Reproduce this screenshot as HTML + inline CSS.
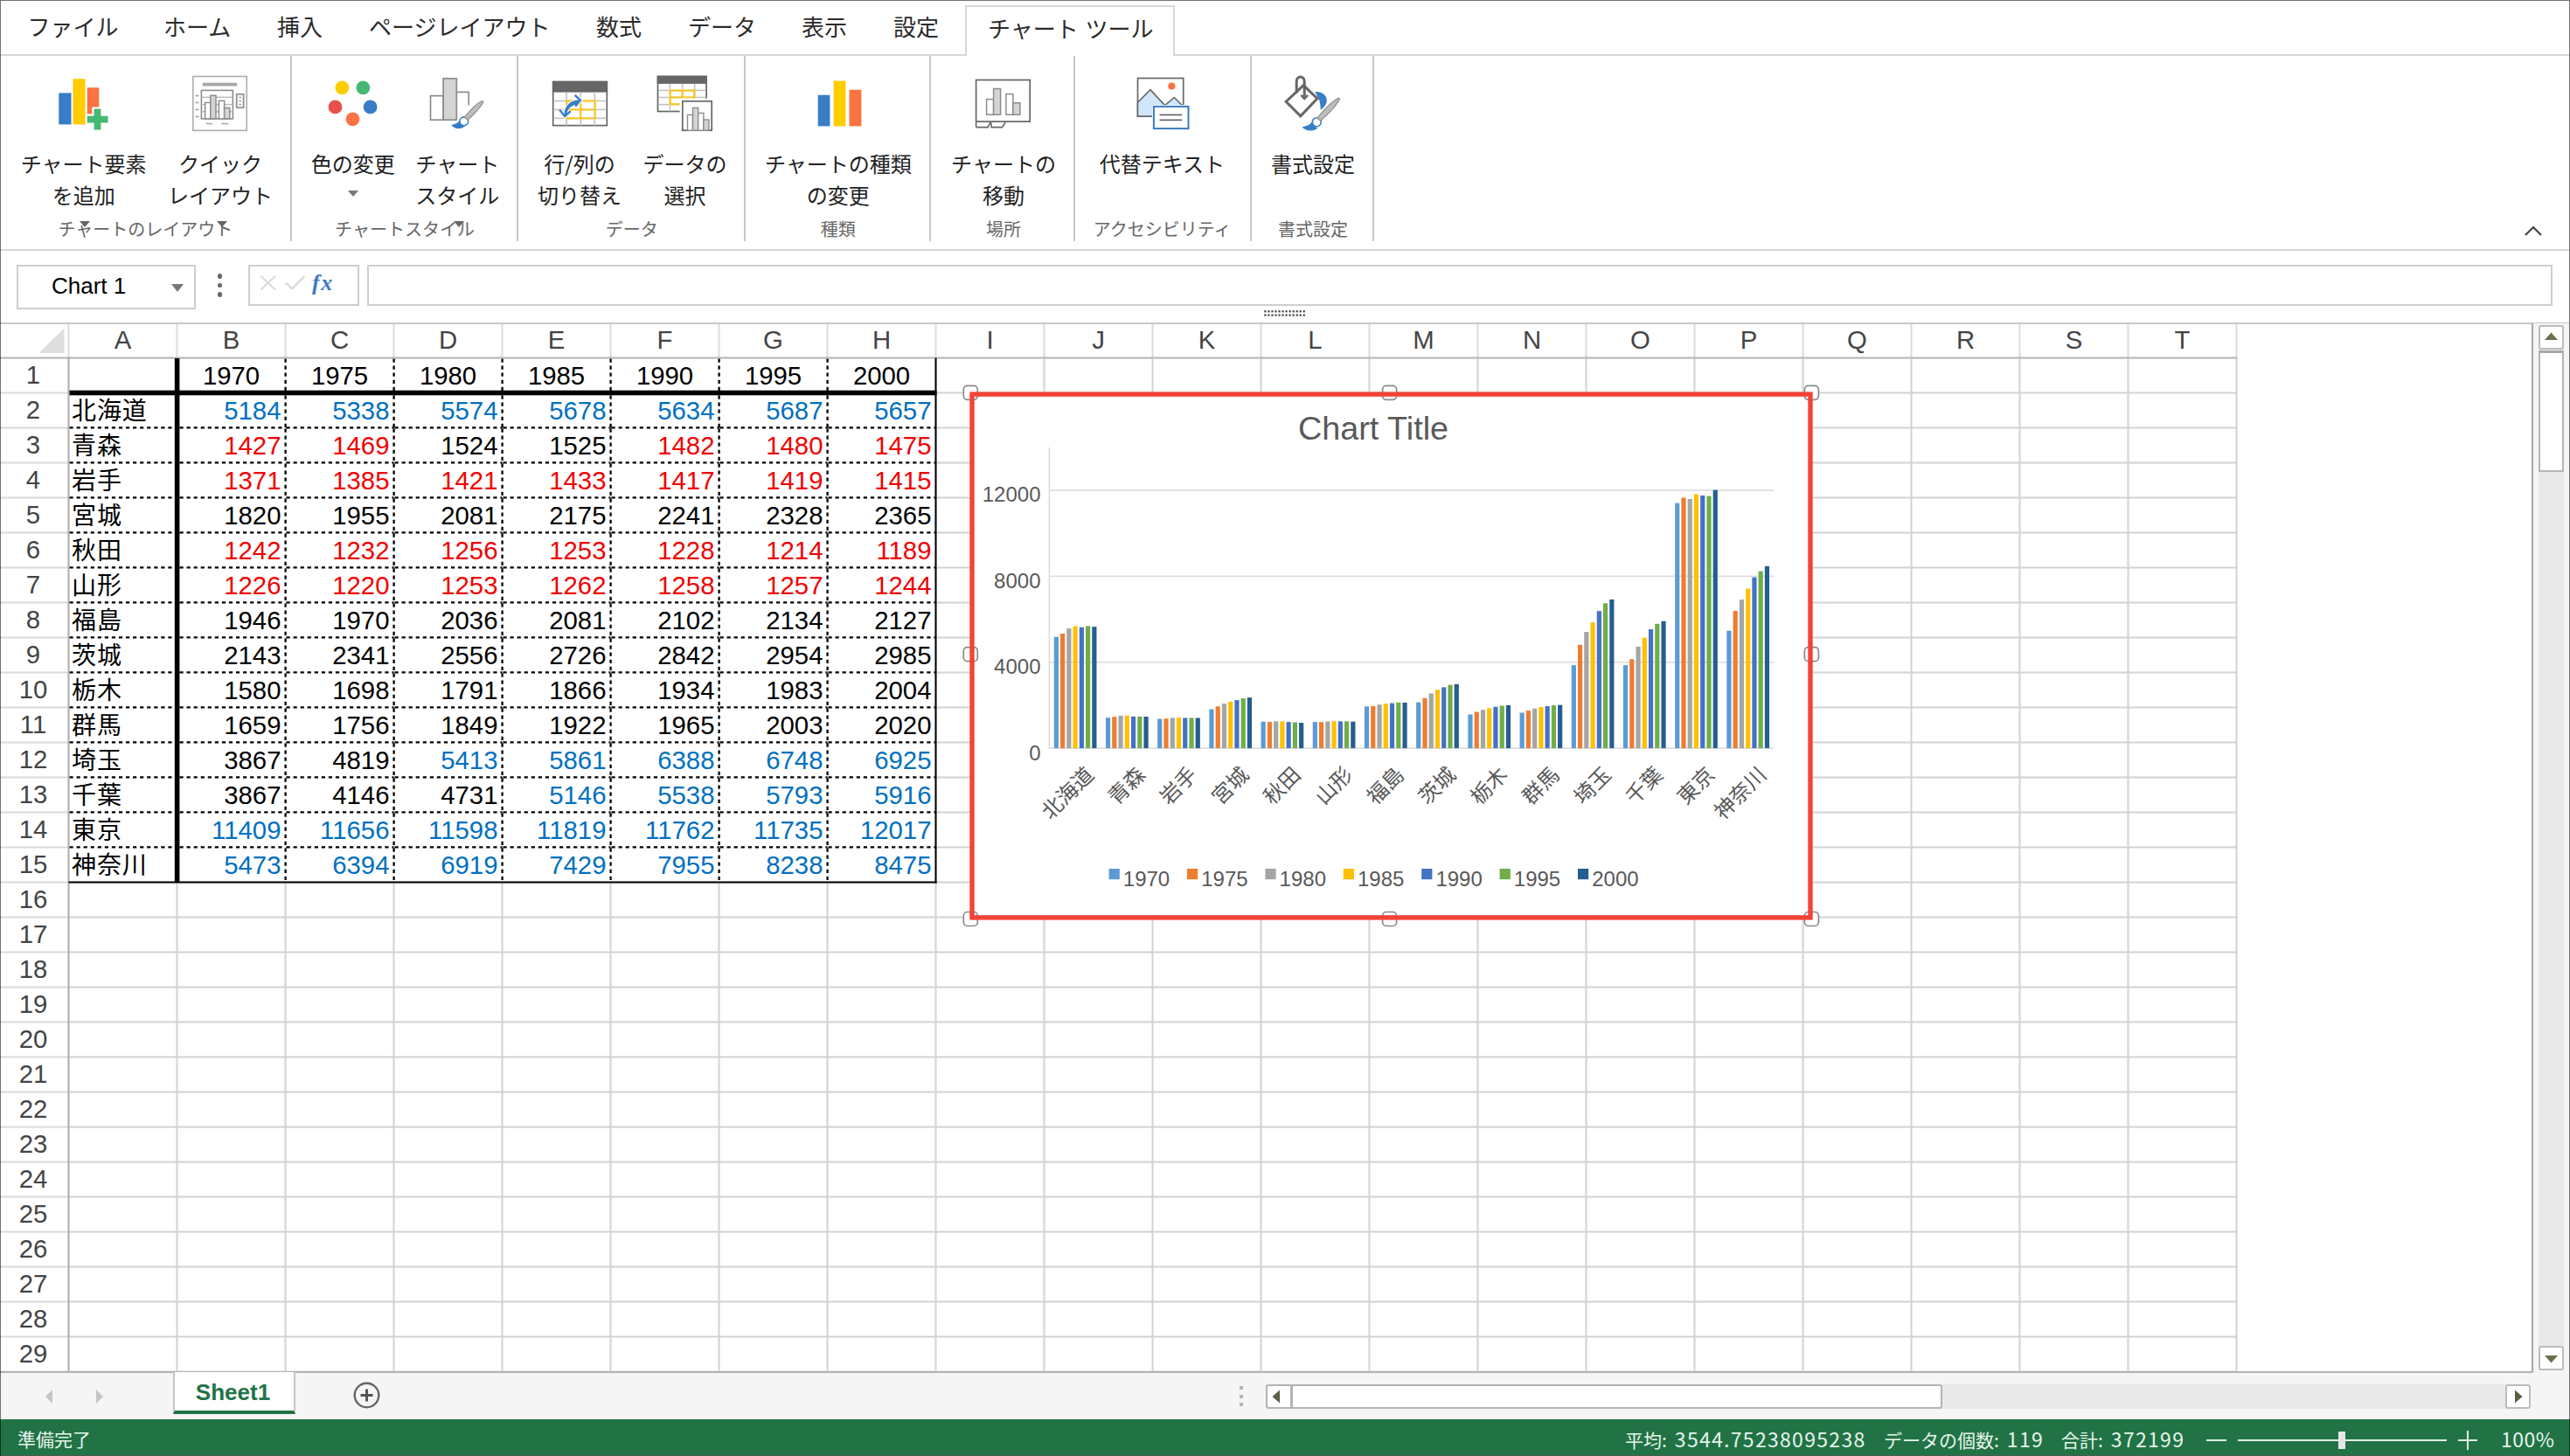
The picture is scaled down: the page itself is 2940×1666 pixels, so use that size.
<!DOCTYPE html><html lang="ja"><head><meta charset="utf-8"><title>Spreadsheet</title><style>
*{box-sizing:border-box;margin:0;padding:0}
html,body{width:2940px;height:1666px;overflow:hidden;background:#fff}
body{position:relative;font-family:"Liberation Sans","Noto Sans CJK JP",sans-serif;color:#222}
.a{position:absolute}
.t{position:absolute;white-space:nowrap}
.jp{font-family:"Noto Sans CJK JP","Liberation Sans",sans-serif}
.tab{position:absolute;top:0;height:59px;line-height:59px;font-size:26px;color:#2b2b2b;white-space:nowrap;font-family:"Noto Sans CJK JP","Liberation Sans",sans-serif}
.bl{position:absolute;font-size:24px;line-height:36px;text-align:center;color:#222;white-space:nowrap;font-family:"Noto Sans CJK JP","Liberation Sans",sans-serif;transform:translateX(-50%)}
.gl{position:absolute;font-size:20px;line-height:28px;text-align:center;color:#666;white-space:nowrap;font-family:"Noto Sans CJK JP","Liberation Sans",sans-serif;transform:translateX(-50%)}
.sep{position:absolute;top:64px;width:2px;height:212px;background:#c8c8c8}
.ch{position:absolute;top:369px;height:38px;line-height:40px;width:124px;text-align:center;font-size:29.33px;color:#444}
.rh{position:absolute;left:0;width:76px;height:40px;line-height:38px;text-align:center;font-size:29.33px;color:#444}
.c{position:absolute;height:40px;line-height:39px;font-size:29.33px;width:124px;white-space:nowrap;color:#000}
.c.r{text-align:right;padding-right:5px}
.c.l{text-align:left;padding-left:3.5px;line-height:36.5px;font-size:28px;letter-spacing:0.9px}
.c.m{text-align:center}
.red{color:#f00000}
.blu{color:#0070c0}
.st{position:absolute;top:1625px;height:42px;line-height:42px;font-size:21px;color:#e8f5ec;white-space:nowrap;font-family:"Noto Sans CJK JP","Liberation Sans",sans-serif}
</style></head><body>
<div class="a" style="left:0;top:62px;width:2940px;height:2px;background:#d6d6d6"></div>
<div class="tab" style="left:31.5px">ファイル</div>
<div class="tab" style="left:187px">ホーム</div>
<div class="tab" style="left:317px">挿入</div>
<div class="tab" style="left:422px">ページレイアウト</div>
<div class="tab" style="left:682px">数式</div>
<div class="tab" style="left:787px">データ</div>
<div class="tab" style="left:917px">表示</div>
<div class="tab" style="left:1022px">設定</div>
<div class="a" style="left:1104px;top:6px;width:240px;height:58px;background:#fff;border:2px solid #d8d8d8;border-bottom:none"></div>
<div class="tab" style="left:1130px;top:2px;word-spacing:2px">チャート ツール</div>
<div class="a" style="left:0;top:285px;width:2940px;height:2px;background:#d6d6d6"></div>
<div class="sep" style="left:332px"></div>
<div class="sep" style="left:591px"></div>
<div class="sep" style="left:851px"></div>
<div class="sep" style="left:1063px"></div>
<div class="sep" style="left:1227.5px"></div>
<div class="sep" style="left:1429.5px"></div>
<div class="sep" style="left:1570px"></div>
<div class="bl" style="left:95.7px;top:169px">チャート要素<br>を追加</div>
<div class="bl" style="left:252px;top:169px">クイック<br>レイアウト</div>
<div class="bl" style="left:403.7px;top:169px">色の変更</div>
<div class="bl" style="left:523.3px;top:169px">チャート<br>スタイル</div>
<div class="bl" style="left:663px;top:169px">行/列の<br>切り替え</div>
<div class="bl" style="left:783.6px;top:169px">データの<br>選択</div>
<div class="bl" style="left:958.8px;top:169px">チャートの種類<br>の変更</div>
<div class="bl" style="left:1148px;top:169px">チャートの<br>移動</div>
<div class="bl" style="left:1329.4px;top:169px">代替テキスト</div>
<div class="bl" style="left:1502px;top:169px">書式設定</div>
<div class="gl" style="left:166.3px;top:248.4px">チャートのレイアウト</div>
<div class="gl" style="left:463px;top:248.4px">チャートスタイル</div>
<div class="gl" style="left:722.8px;top:248.4px">データ</div>
<div class="gl" style="left:958.8px;top:248.4px">種類</div>
<div class="gl" style="left:1148px;top:248.4px">場所</div>
<div class="gl" style="left:1329.6px;top:248.4px">アクセシビリティ</div>
<div class="gl" style="left:1502px;top:248.4px">書式設定</div>
<svg class="a" style="left:397.7px;top:218.0px" width="12" height="7" viewBox="0 0 12 7"><path d="M0 0H12L6.0 7Z" fill="#777"/></svg>
<svg class="a" style="left:91.0px;top:253.0px" width="12" height="7" viewBox="0 0 12 7"><path d="M0 0H12L6.0 7Z" fill="#666"/></svg>
<svg class="a" style="left:248.0px;top:253.0px" width="12" height="7" viewBox="0 0 12 7"><path d="M0 0H12L6.0 7Z" fill="#666"/></svg>
<svg class="a" style="left:518.5px;top:253.0px" width="12" height="7" viewBox="0 0 12 7"><path d="M0 0H12L6.0 7Z" fill="#666"/></svg>
<svg class="a" style="left:2886px;top:256px" width="24" height="16" viewBox="0 0 24 16"><path d="M3 13L12 4L21 13" fill="none" stroke="#444" stroke-width="2.2"/></svg>
<svg class="a" style="left:0;top:80px" width="1600" height="80" viewBox="0 80 1600 80"><rect x="67.3" y="106.4" width="14.2" height="36" fill="#377dc8"/><rect x="83.5" y="90.2" width="14" height="52.2" fill="#fc0"/><path d="M99.7 100.3H113.3V122.4H105.4V130.2H99.7Z" fill="#fa7343"/><path d="M107.6 124.6H115.4V132.7H123.5V140.4H115.4V148.4H107.6V140.4H99.7V132.7H107.6Z" fill="#45b871"/><rect x="220.8" y="87.5" width="61.4" height="61.8" fill="#fff" stroke="#b0b0b0" stroke-width="1.7"/><rect x="231.7" y="94.7" width="39.5" height="3.8" fill="#a8a8a8"/><rect x="230.4" y="103.4" width="36" height="32.5" fill="#fff" stroke="#8c8c8c" stroke-width="1.6"/><rect x="230.4" y="110.6" width="36" height="1.4" fill="#b8b8b8"/><rect x="230.4" y="118.89999999999999" width="36" height="1.4" fill="#b8b8b8"/><rect x="230.4" y="127.1" width="36" height="1.4" fill="#b8b8b8"/><rect x="223.6" y="108.7" width="3.8" height="1.6" fill="#a0a0a0"/><rect x="223.6" y="116.60000000000001" width="3.8" height="1.6" fill="#a0a0a0"/><rect x="223.6" y="124.60000000000001" width="3.8" height="1.6" fill="#a0a0a0"/><rect x="223.6" y="132.7" width="3.8" height="1.6" fill="#a0a0a0"/><rect x="234.6" y="117.4" width="6.2" height="18.5" fill="#fff" stroke="#8c8c8c" stroke-width="1.5"/><rect x="240.8" y="109.3" width="6.2" height="26.6" fill="#d4d4d4" stroke="#8c8c8c" stroke-width="1.5"/><rect x="250.4" y="115.3" width="6.2" height="20.6" fill="#fff" stroke="#8c8c8c" stroke-width="1.5"/><rect x="256.6" y="123.4" width="6.2" height="12.5" fill="#d4d4d4" stroke="#8c8c8c" stroke-width="1.5"/><rect x="270.7" y="107.8" width="7.9" height="15.4" fill="#fff" stroke="#8c8c8c" stroke-width="1.7"/><rect x="273.8" y="110.7" width="1.7" height="1.6" fill="#777"/><rect x="273.8" y="114.7" width="1.7" height="1.6" fill="#777"/><rect x="273.8" y="118.8" width="1.7" height="1.6" fill="#777"/><rect x="235.8" y="140.7" width="7.5" height="1.6" fill="#a8a8a8"/><rect x="253.5" y="140.7" width="8" height="1.6" fill="#a8a8a8"/><circle cx="391.4" cy="100.3" r="7.9" fill="#fc0"/><circle cx="415.4" cy="100.3" r="7.9" fill="#45b871"/><circle cx="383.5" cy="122.4" r="7.9" fill="#e8514a"/><circle cx="423.6" cy="122.4" r="7.9" fill="#377dc8"/><circle cx="403.5" cy="136.3" r="7.9" fill="#fa7343"/><path d="M522.6 105.3H536.2V120.5" fill="none" stroke="#8c8c8c" stroke-width="1.7"/><rect x="492.5" y="109.6" width="14.6" height="27.6" fill="#fff" stroke="#8c8c8c" stroke-width="1.7"/><rect x="507.1" y="89.8" width="15.2" height="47.4" fill="#d4d4d4" stroke="#8c8c8c" stroke-width="1.7"/><path d="M531 134.6C537.5 126.5 546.5 117.5 552 115.2C553 115.6 553.2 116.4 552.8 117.2C549.5 123.5 541 132 534.6 137.8Z" fill="#fff" stroke="#fff" stroke-width="4.5" stroke-linejoin="round"/><path d="M515 143.5C519 141.2 522.6 141.6 524.8 137.4C526 134 528.5 132.4 531.2 132.6C534.8 133 537 136 536.6 139.4C536 146.5 524 151 515 143.5Z" fill="#fff" stroke="#fff" stroke-width="3"/><path d="M516.3 143.4C519.8 141.6 523.6 141.8 525.4 137.8C526.5 139.8 528.8 143.2 531.9 144.3C528 148.4 520.5 147.9 516.3 143.4Z" fill="#377dc8"/><circle cx="530.8" cy="138.8" r="4.9" fill="#fff" stroke="#377dc8" stroke-width="1.6"/><path d="M531.4 134.2C537.5 126.5 546.5 117.8 551.8 115.5C552.8 115.8 553 116.5 552.6 117.3C549.5 123.3 541 131.8 535 137.4Z" fill="#bdbdbd" stroke="#8c8c8c" stroke-width="1.2" stroke-linejoin="round"/><rect x="632.7" y="93.6" width="61.6" height="50" fill="#fff" stroke="#666" stroke-width="1.7"/><rect x="631.9" y="92.8" width="63.2" height="12.8" fill="#666"/><rect x="647.2" y="105.6" width="1.6" height="38" fill="#c2c2c2"/><rect x="663.4000000000001" y="105.6" width="1.6" height="38" fill="#c2c2c2"/><rect x="679.6" y="105.6" width="1.6" height="38" fill="#c2c2c2"/><rect x="633.5" y="114.7" width="60" height="1.6" fill="#c2c2c2"/><rect x="633.5" y="124.60000000000001" width="60" height="1.6" fill="#c2c2c2"/><rect x="633.5" y="134.5" width="60" height="1.6" fill="#c2c2c2"/><rect x="647.5" y="114.4" width="33.9" height="22" fill="#fff"/><rect x="648.4" y="115.4" width="32.2" height="20" fill="none" stroke="#f5c31c" stroke-width="2.1"/><rect x="663.2" y="115.4" width="2.1" height="20" fill="#f5c31c"/><rect x="648.4" y="124.4" width="32.2" height="2.1" fill="#f5c31c"/><path d="M657.7 108.9L664 114.6L658.2 121.4M640.2 125.8L646 133L652.6 127.2M661.5 115.6C652 116.8 647.4 122.6 646.4 131.3" fill="none" stroke="#fff" stroke-width="4.6"/><path d="M662 114.3C652.6 114.8 646 120.8 645.4 131L648.2 131C649.2 125.2 652.6 120.4 660.8 119Z" fill="#377dc8"/><path d="M657.6 108.8L664 114.7L658.1 121.6" fill="none" stroke="#377dc8" stroke-width="2.4"/><path d="M640.1 125.6L646.1 133L652.8 127.1" fill="none" stroke="#377dc8" stroke-width="2.4"/><rect x="752.5" y="87.5" width="55.6" height="40" fill="#fff" stroke="#666" stroke-width="1.7"/><rect x="751.7" y="86.7" width="57.2" height="9.2" fill="#666"/><rect x="765.6" y="95.8" width="1.6" height="31.6" fill="#c2c2c2"/><rect x="779.8000000000001" y="95.8" width="1.6" height="31.6" fill="#c2c2c2"/><rect x="793.9000000000001" y="95.8" width="1.6" height="31.6" fill="#c2c2c2"/><rect x="753.3" y="102.60000000000001" width="54" height="1.6" fill="#c2c2c2"/><rect x="753.3" y="110.7" width="54" height="1.6" fill="#c2c2c2"/><rect x="753.3" y="118.8" width="54" height="1.6" fill="#c2c2c2"/><rect x="765.4" y="102.4" width="29.8" height="17.8" fill="#fff"/><rect x="766.6" y="103.6" width="27.6" height="15.6" fill="none" stroke="#f5c31c" stroke-width="2.1"/><rect x="779.6" y="103.6" width="2.1" height="8" fill="#f5c31c"/><rect x="766.6" y="110.4" width="27.6" height="2.1" fill="#f5c31c"/><rect x="777.6" y="112.6" width="39.8" height="39.6" fill="#fff"/><rect x="780.8" y="115.8" width="33.4" height="33.4" fill="#fff" stroke="#666" stroke-width="1.7"/><rect x="786.5" y="131.4" width="6" height="17.8" fill="#fff" stroke="#8c8c8c" stroke-width="1.4"/><rect x="792.5" y="123.4" width="6.2" height="25.8" fill="#d4d4d4" stroke="#8c8c8c" stroke-width="1.4"/><rect x="798.7" y="129.4" width="6.2" height="19.8" fill="#fff" stroke="#8c8c8c" stroke-width="1.4"/><rect x="804.9" y="137" width="6" height="12.2" fill="#d4d4d4" stroke="#8c8c8c" stroke-width="1.4"/><rect x="935.7" y="108.7" width="13.7" height="35.7" fill="#377dc8"/><rect x="953.6" y="92.5" width="13.8" height="51.9" fill="#fc0"/><rect x="971.5" y="102.7" width="13.9" height="41.7" fill="#fa7343"/><path d="M1116.6 139.8V144.2Q1116.6 145.6 1118 145.6H1130.2L1133 139.8M1133.5 139.8L1134.2 145.6H1146.6L1150.2 139.8" fill="#fff" stroke="#666" stroke-width="1.6"/><rect x="1116.6" y="91.5" width="61.6" height="47.6" fill="#fff" stroke="#666" stroke-width="1.7"/><rect x="1128.6" y="113.6" width="8" height="17.6" fill="#fff" stroke="#8c8c8c" stroke-width="1.5"/><rect x="1136.6" y="101.5" width="8" height="29.7" fill="#d4d4d4" stroke="#8c8c8c" stroke-width="1.5"/><rect x="1150.9" y="107.6" width="8" height="23.6" fill="#fff" stroke="#8c8c8c" stroke-width="1.5"/><rect x="1158.9" y="117.7" width="8" height="13.5" fill="#d4d4d4" stroke="#8c8c8c" stroke-width="1.5"/><rect x="1301.5" y="89.5" width="52.2" height="43.6" fill="#fff" stroke="#666" stroke-width="1.7"/><path d="M1301.5 117.3L1316 102.6L1332.6 120.6L1343.3 111.5L1353.7 122V133.1H1301.5Z" fill="#d0e7fb" stroke="#666" stroke-width="1.6" stroke-linejoin="miter"/><circle cx="1340.4" cy="98.6" r="4.1" fill="#fa7343"/><rect x="1318" y="120" width="43.4" height="29" fill="#fff"/><rect x="1319.9" y="121.9" width="39.6" height="25.2" fill="#fff" stroke="#3b7cc0" stroke-width="2"/><rect x="1326.5" y="130.6" width="25.8" height="1.7" fill="#666"/><rect x="1326.5" y="136.5" width="25.8" height="1.7" fill="#666"/><path d="M1504.5 105.2C1511 104.2 1518.4 108.5 1517.8 115.8C1517.4 120 1513.8 123.6 1511.8 128.8C1510 124 1511.3 118 1508.3 113Z" fill="#377dc8"/><path d="M1491.2 97.6L1506.9 112.7L1487.8 132.9L1471.2 116.2Z" fill="#fff" stroke="#666" stroke-width="3" stroke-linejoin="miter"/><path d="M1483.2 106.5V93.2C1483.2 86.4 1492.2 86.4 1492.2 93.2V110.8" fill="none" stroke="#666" stroke-width="3"/><path d="M1488.4 108.8L1492.2 112.9L1496 108.8" fill="none" stroke="#666" stroke-width="2.6"/><path d="M1506.6 135C1513 126.5 1524 115.2 1531.6 111.8C1532.6 112.2 1532.8 113 1532.4 113.8C1528.5 121.5 1518 132 1510.4 138.6Z" fill="#fff" stroke="#fff" stroke-width="4.5" stroke-linejoin="round"/><path d="M1488.4 145.6C1493 143.4 1497.6 144 1500 139C1501.4 135 1504 133.2 1506.8 133.4C1510.6 133.8 1512.8 137 1512.4 140.4C1511.6 148.5 1498 153.5 1488.4 145.6Z" fill="#fff" stroke="#fff" stroke-width="3"/><path d="M1489.4 145.5C1494 143.6 1498.4 143.8 1500.8 139.2C1501.8 142 1504 145.6 1507.4 146.3C1503 151 1494.5 150.2 1489.4 145.5Z" fill="#377dc8"/><circle cx="1506.3" cy="139.7" r="5" fill="#fff" stroke="#377dc8" stroke-width="1.6"/><path d="M1507 135C1513.4 126.5 1524.4 115.4 1531.4 112C1532.4 112.3 1532.6 113 1532.2 113.8C1528.4 121.4 1518 131.8 1510.6 138.2Z" fill="#bdbdbd" stroke="#8c8c8c" stroke-width="1.2" stroke-linejoin="round"/></svg>
<div class="a" style="left:19px;top:303px;width:205px;height:51px;border:2px solid #cecece;background:#fff"></div>
<div class="t" style="left:59px;top:305.5px;font-size:26px;line-height:42px;color:#000">Chart 1</div>
<svg class="a" style="left:195.5px;top:325.0px" width="14" height="9" viewBox="0 0 14 9"><path d="M0 0H14L7.0 9Z" fill="#777"/></svg>
<div class="a" style="left:248.5px;top:313.0px;width:5.6px;height:5.6px;border-radius:50%;background:#666"></div>
<div class="a" style="left:248.5px;top:323.59999999999997px;width:5.6px;height:5.6px;border-radius:50%;background:#666"></div>
<div class="a" style="left:248.5px;top:334.2px;width:5.6px;height:5.6px;border-radius:50%;background:#666"></div>
<div class="a" style="left:284px;top:303px;width:127px;height:47px;border:2px solid #cecece;background:#fff"></div>
<svg class="a" style="left:290px;top:308px" width="70" height="32" viewBox="290 308 70 32"><path d="M298.4 315.8L315 331.5M315 315.8L298.4 331.5" stroke="#dcdcdc" stroke-width="2.2" fill="none"/><path d="M326.7 323.4L334.3 330.5L348.4 315.8" stroke="#dcdcdc" stroke-width="2.6" fill="none"/></svg>
<div class="t" style="left:357px;top:304px;font-family:'Liberation Serif',serif;font-style:italic;font-weight:bold;font-size:26px;line-height:40px;color:#3b79c3;letter-spacing:1.5px">fx</div>
<div class="a" style="left:420px;top:303px;width:2500px;height:47px;border:2px solid #cecece;background:#fff"></div>
<svg class="a" style="left:1444px;top:353px" width="52" height="12" viewBox="1444 353 52 12"><rect x="1446.30" y="355.20" width="2.2" height="2.2" fill="#444"/><rect x="1446.30" y="359.50" width="2.2" height="2.2" fill="#444"/><rect x="1450.33" y="355.20" width="2.2" height="2.2" fill="#444"/><rect x="1450.33" y="359.50" width="2.2" height="2.2" fill="#444"/><rect x="1454.36" y="355.20" width="2.2" height="2.2" fill="#444"/><rect x="1454.36" y="359.50" width="2.2" height="2.2" fill="#444"/><rect x="1458.39" y="355.20" width="2.2" height="2.2" fill="#444"/><rect x="1458.39" y="359.50" width="2.2" height="2.2" fill="#444"/><rect x="1462.42" y="355.20" width="2.2" height="2.2" fill="#444"/><rect x="1462.42" y="359.50" width="2.2" height="2.2" fill="#444"/><rect x="1466.45" y="355.20" width="2.2" height="2.2" fill="#444"/><rect x="1466.45" y="359.50" width="2.2" height="2.2" fill="#444"/><rect x="1470.48" y="355.20" width="2.2" height="2.2" fill="#444"/><rect x="1470.48" y="359.50" width="2.2" height="2.2" fill="#444"/><rect x="1474.51" y="355.20" width="2.2" height="2.2" fill="#444"/><rect x="1474.51" y="359.50" width="2.2" height="2.2" fill="#444"/><rect x="1478.54" y="355.20" width="2.2" height="2.2" fill="#444"/><rect x="1478.54" y="359.50" width="2.2" height="2.2" fill="#444"/><rect x="1482.57" y="355.20" width="2.2" height="2.2" fill="#444"/><rect x="1482.57" y="359.50" width="2.2" height="2.2" fill="#444"/><rect x="1486.60" y="355.20" width="2.2" height="2.2" fill="#444"/><rect x="1486.60" y="359.50" width="2.2" height="2.2" fill="#444"/><rect x="1490.63" y="355.20" width="2.2" height="2.2" fill="#444"/><rect x="1490.63" y="359.50" width="2.2" height="2.2" fill="#444"/></svg>
<div class="a" style="left:0;top:368.5px;width:2940px;height:2px;background:#c8c8c8"></div>
<svg class="a" style="left:0;top:370px" width="2897" height="1200" viewBox="0 370 2897 1200"><path d="M73.5 375.5V404H44.5Z" fill="#dedede"/><rect x="77.5" y="371" width="2" height="38" fill="#dcdcdc"/><rect x="201.5" y="371" width="2" height="38" fill="#dcdcdc"/><rect x="325.5" y="371" width="2" height="38" fill="#dcdcdc"/><rect x="449.5" y="371" width="2" height="38" fill="#dcdcdc"/><rect x="573.5" y="371" width="2" height="38" fill="#dcdcdc"/><rect x="697.5" y="371" width="2" height="38" fill="#dcdcdc"/><rect x="821.5" y="371" width="2" height="38" fill="#dcdcdc"/><rect x="945.5" y="371" width="2" height="38" fill="#dcdcdc"/><rect x="1069.5" y="371" width="2" height="38" fill="#dcdcdc"/><rect x="1193.5" y="371" width="2" height="38" fill="#dcdcdc"/><rect x="1317.5" y="371" width="2" height="38" fill="#dcdcdc"/><rect x="1441.5" y="371" width="2" height="38" fill="#dcdcdc"/><rect x="1565.5" y="371" width="2" height="38" fill="#dcdcdc"/><rect x="1689.5" y="371" width="2" height="38" fill="#dcdcdc"/><rect x="1813.5" y="371" width="2" height="38" fill="#dcdcdc"/><rect x="1937.5" y="371" width="2" height="38" fill="#dcdcdc"/><rect x="2061.5" y="371" width="2" height="38" fill="#dcdcdc"/><rect x="2185.5" y="371" width="2" height="38" fill="#dcdcdc"/><rect x="2309.5" y="371" width="2" height="38" fill="#dcdcdc"/><rect x="2433.5" y="371" width="2" height="38" fill="#dcdcdc"/><rect x="2557.5" y="371" width="2" height="38" fill="#dcdcdc"/><rect x="0" y="448.5" width="78.5" height="2" fill="#dadada"/><rect x="78.5" y="448.5" width="2480" height="2" fill="#d2d2d2"/><rect x="0" y="488.5" width="78.5" height="2" fill="#dadada"/><rect x="78.5" y="488.5" width="2480" height="2" fill="#d2d2d2"/><rect x="0" y="528.5" width="78.5" height="2" fill="#dadada"/><rect x="78.5" y="528.5" width="2480" height="2" fill="#d2d2d2"/><rect x="0" y="568.5" width="78.5" height="2" fill="#dadada"/><rect x="78.5" y="568.5" width="2480" height="2" fill="#d2d2d2"/><rect x="0" y="608.5" width="78.5" height="2" fill="#dadada"/><rect x="78.5" y="608.5" width="2480" height="2" fill="#d2d2d2"/><rect x="0" y="648.5" width="78.5" height="2" fill="#dadada"/><rect x="78.5" y="648.5" width="2480" height="2" fill="#d2d2d2"/><rect x="0" y="688.5" width="78.5" height="2" fill="#dadada"/><rect x="78.5" y="688.5" width="2480" height="2" fill="#d2d2d2"/><rect x="0" y="728.5" width="78.5" height="2" fill="#dadada"/><rect x="78.5" y="728.5" width="2480" height="2" fill="#d2d2d2"/><rect x="0" y="768.5" width="78.5" height="2" fill="#dadada"/><rect x="78.5" y="768.5" width="2480" height="2" fill="#d2d2d2"/><rect x="0" y="808.5" width="78.5" height="2" fill="#dadada"/><rect x="78.5" y="808.5" width="2480" height="2" fill="#d2d2d2"/><rect x="0" y="848.5" width="78.5" height="2" fill="#dadada"/><rect x="78.5" y="848.5" width="2480" height="2" fill="#d2d2d2"/><rect x="0" y="888.5" width="78.5" height="2" fill="#dadada"/><rect x="78.5" y="888.5" width="2480" height="2" fill="#d2d2d2"/><rect x="0" y="928.5" width="78.5" height="2" fill="#dadada"/><rect x="78.5" y="928.5" width="2480" height="2" fill="#d2d2d2"/><rect x="0" y="968.5" width="78.5" height="2" fill="#dadada"/><rect x="78.5" y="968.5" width="2480" height="2" fill="#d2d2d2"/><rect x="0" y="1008.5" width="78.5" height="2" fill="#dadada"/><rect x="78.5" y="1008.5" width="2480" height="2" fill="#d2d2d2"/><rect x="0" y="1048.5" width="78.5" height="2" fill="#dadada"/><rect x="78.5" y="1048.5" width="2480" height="2" fill="#d2d2d2"/><rect x="0" y="1088.5" width="78.5" height="2" fill="#dadada"/><rect x="78.5" y="1088.5" width="2480" height="2" fill="#d2d2d2"/><rect x="0" y="1128.5" width="78.5" height="2" fill="#dadada"/><rect x="78.5" y="1128.5" width="2480" height="2" fill="#d2d2d2"/><rect x="0" y="1168.5" width="78.5" height="2" fill="#dadada"/><rect x="78.5" y="1168.5" width="2480" height="2" fill="#d2d2d2"/><rect x="0" y="1208.5" width="78.5" height="2" fill="#dadada"/><rect x="78.5" y="1208.5" width="2480" height="2" fill="#d2d2d2"/><rect x="0" y="1248.5" width="78.5" height="2" fill="#dadada"/><rect x="78.5" y="1248.5" width="2480" height="2" fill="#d2d2d2"/><rect x="0" y="1288.5" width="78.5" height="2" fill="#dadada"/><rect x="78.5" y="1288.5" width="2480" height="2" fill="#d2d2d2"/><rect x="0" y="1328.5" width="78.5" height="2" fill="#dadada"/><rect x="78.5" y="1328.5" width="2480" height="2" fill="#d2d2d2"/><rect x="0" y="1368.5" width="78.5" height="2" fill="#dadada"/><rect x="78.5" y="1368.5" width="2480" height="2" fill="#d2d2d2"/><rect x="0" y="1408.5" width="78.5" height="2" fill="#dadada"/><rect x="78.5" y="1408.5" width="2480" height="2" fill="#d2d2d2"/><rect x="0" y="1448.5" width="78.5" height="2" fill="#dadada"/><rect x="78.5" y="1448.5" width="2480" height="2" fill="#d2d2d2"/><rect x="0" y="1488.5" width="78.5" height="2" fill="#dadada"/><rect x="78.5" y="1488.5" width="2480" height="2" fill="#d2d2d2"/><rect x="0" y="1528.5" width="78.5" height="2" fill="#dadada"/><rect x="78.5" y="1528.5" width="2480" height="2" fill="#d2d2d2"/><rect x="0" y="1568.5" width="78.5" height="2" fill="#dadada"/><rect x="78.5" y="1568.5" width="2480" height="2" fill="#d2d2d2"/><rect x="201.5" y="409.5" width="2" height="1160" fill="#d2d2d2"/><rect x="325.5" y="409.5" width="2" height="1160" fill="#d2d2d2"/><rect x="449.5" y="409.5" width="2" height="1160" fill="#d2d2d2"/><rect x="573.5" y="409.5" width="2" height="1160" fill="#d2d2d2"/><rect x="697.5" y="409.5" width="2" height="1160" fill="#d2d2d2"/><rect x="821.5" y="409.5" width="2" height="1160" fill="#d2d2d2"/><rect x="945.5" y="409.5" width="2" height="1160" fill="#d2d2d2"/><rect x="1069.5" y="409.5" width="2" height="1160" fill="#d2d2d2"/><rect x="1193.5" y="409.5" width="2" height="1160" fill="#d2d2d2"/><rect x="1317.5" y="409.5" width="2" height="1160" fill="#d2d2d2"/><rect x="1441.5" y="409.5" width="2" height="1160" fill="#d2d2d2"/><rect x="1565.5" y="409.5" width="2" height="1160" fill="#d2d2d2"/><rect x="1689.5" y="409.5" width="2" height="1160" fill="#d2d2d2"/><rect x="1813.5" y="409.5" width="2" height="1160" fill="#d2d2d2"/><rect x="1937.5" y="409.5" width="2" height="1160" fill="#d2d2d2"/><rect x="2061.5" y="409.5" width="2" height="1160" fill="#d2d2d2"/><rect x="2185.5" y="409.5" width="2" height="1160" fill="#d2d2d2"/><rect x="2309.5" y="409.5" width="2" height="1160" fill="#d2d2d2"/><rect x="2433.5" y="409.5" width="2" height="1160" fill="#d2d2d2"/><rect x="2557.5" y="409.5" width="2" height="1160" fill="#d2d2d2"/><rect x="0" y="408.5" width="2559.5" height="2" fill="#b4b4b4"/><rect x="77.5" y="408.5" width="2" height="1161" fill="#ababab"/><path d="M79.5 489.3H202.5M205.5 489.3H326.5M327.5 489.3H450.5M451.5 489.3H574.5M575.5 489.3H698.5M699.5 489.3H822.5M823.5 489.3H946.5M947.5 489.3H1070.5M79.5 529.3H202.5M205.5 529.3H326.5M327.5 529.3H450.5M451.5 529.3H574.5M575.5 529.3H698.5M699.5 529.3H822.5M823.5 529.3H946.5M947.5 529.3H1070.5M79.5 569.3H202.5M205.5 569.3H326.5M327.5 569.3H450.5M451.5 569.3H574.5M575.5 569.3H698.5M699.5 569.3H822.5M823.5 569.3H946.5M947.5 569.3H1070.5M79.5 609.3H202.5M205.5 609.3H326.5M327.5 609.3H450.5M451.5 609.3H574.5M575.5 609.3H698.5M699.5 609.3H822.5M823.5 609.3H946.5M947.5 609.3H1070.5M79.5 649.3H202.5M205.5 649.3H326.5M327.5 649.3H450.5M451.5 649.3H574.5M575.5 649.3H698.5M699.5 649.3H822.5M823.5 649.3H946.5M947.5 649.3H1070.5M79.5 689.3H202.5M205.5 689.3H326.5M327.5 689.3H450.5M451.5 689.3H574.5M575.5 689.3H698.5M699.5 689.3H822.5M823.5 689.3H946.5M947.5 689.3H1070.5M79.5 729.3H202.5M205.5 729.3H326.5M327.5 729.3H450.5M451.5 729.3H574.5M575.5 729.3H698.5M699.5 729.3H822.5M823.5 729.3H946.5M947.5 729.3H1070.5M79.5 769.3H202.5M205.5 769.3H326.5M327.5 769.3H450.5M451.5 769.3H574.5M575.5 769.3H698.5M699.5 769.3H822.5M823.5 769.3H946.5M947.5 769.3H1070.5M79.5 809.3H202.5M205.5 809.3H326.5M327.5 809.3H450.5M451.5 809.3H574.5M575.5 809.3H698.5M699.5 809.3H822.5M823.5 809.3H946.5M947.5 809.3H1070.5M79.5 849.3H202.5M205.5 849.3H326.5M327.5 849.3H450.5M451.5 849.3H574.5M575.5 849.3H698.5M699.5 849.3H822.5M823.5 849.3H946.5M947.5 849.3H1070.5M79.5 889.3H202.5M205.5 889.3H326.5M327.5 889.3H450.5M451.5 889.3H574.5M575.5 889.3H698.5M699.5 889.3H822.5M823.5 889.3H946.5M947.5 889.3H1070.5M79.5 929.3H202.5M205.5 929.3H326.5M327.5 929.3H450.5M451.5 929.3H574.5M575.5 929.3H698.5M699.5 929.3H822.5M823.5 929.3H946.5M947.5 929.3H1070.5M79.5 969.3H202.5M205.5 969.3H326.5M327.5 969.3H450.5M451.5 969.3H574.5M575.5 969.3H698.5M699.5 969.3H822.5M823.5 969.3H946.5M947.5 969.3H1070.5M326.6 410.5V449.5M326.6 452.5V489.5M326.6 490.5V529.5M326.6 530.5V569.5M326.6 570.5V609.5M326.6 610.5V649.5M326.6 650.5V689.5M326.6 690.5V729.5M326.6 730.5V769.5M326.6 770.5V809.5M326.6 810.5V849.5M326.6 850.5V889.5M326.6 890.5V929.5M326.6 930.5V969.5M326.6 970.5V1009.5M450.6 410.5V449.5M450.6 452.5V489.5M450.6 490.5V529.5M450.6 530.5V569.5M450.6 570.5V609.5M450.6 610.5V649.5M450.6 650.5V689.5M450.6 690.5V729.5M450.6 730.5V769.5M450.6 770.5V809.5M450.6 810.5V849.5M450.6 850.5V889.5M450.6 890.5V929.5M450.6 930.5V969.5M450.6 970.5V1009.5M574.6 410.5V449.5M574.6 452.5V489.5M574.6 490.5V529.5M574.6 530.5V569.5M574.6 570.5V609.5M574.6 610.5V649.5M574.6 650.5V689.5M574.6 690.5V729.5M574.6 730.5V769.5M574.6 770.5V809.5M574.6 810.5V849.5M574.6 850.5V889.5M574.6 890.5V929.5M574.6 930.5V969.5M574.6 970.5V1009.5M698.6 410.5V449.5M698.6 452.5V489.5M698.6 490.5V529.5M698.6 530.5V569.5M698.6 570.5V609.5M698.6 610.5V649.5M698.6 650.5V689.5M698.6 690.5V729.5M698.6 730.5V769.5M698.6 770.5V809.5M698.6 810.5V849.5M698.6 850.5V889.5M698.6 890.5V929.5M698.6 930.5V969.5M698.6 970.5V1009.5M822.6 410.5V449.5M822.6 452.5V489.5M822.6 490.5V529.5M822.6 530.5V569.5M822.6 570.5V609.5M822.6 610.5V649.5M822.6 650.5V689.5M822.6 690.5V729.5M822.6 730.5V769.5M822.6 770.5V809.5M822.6 810.5V849.5M822.6 850.5V889.5M822.6 890.5V929.5M822.6 930.5V969.5M822.6 970.5V1009.5M946.6 410.5V449.5M946.6 452.5V489.5M946.6 490.5V529.5M946.6 530.5V569.5M946.6 570.5V609.5M946.6 610.5V649.5M946.6 650.5V689.5M946.6 690.5V729.5M946.6 730.5V769.5M946.6 770.5V809.5M946.6 810.5V849.5M946.6 850.5V889.5M946.6 890.5V929.5M946.6 930.5V969.5M946.6 970.5V1009.5" stroke="#fff" stroke-width="3" fill="none"/><path d="M79.5 489.3H202.5M205.5 489.3H326.5M327.5 489.3H450.5M451.5 489.3H574.5M575.5 489.3H698.5M699.5 489.3H822.5M823.5 489.3H946.5M947.5 489.3H1070.5M79.5 529.3H202.5M205.5 529.3H326.5M327.5 529.3H450.5M451.5 529.3H574.5M575.5 529.3H698.5M699.5 529.3H822.5M823.5 529.3H946.5M947.5 529.3H1070.5M79.5 569.3H202.5M205.5 569.3H326.5M327.5 569.3H450.5M451.5 569.3H574.5M575.5 569.3H698.5M699.5 569.3H822.5M823.5 569.3H946.5M947.5 569.3H1070.5M79.5 609.3H202.5M205.5 609.3H326.5M327.5 609.3H450.5M451.5 609.3H574.5M575.5 609.3H698.5M699.5 609.3H822.5M823.5 609.3H946.5M947.5 609.3H1070.5M79.5 649.3H202.5M205.5 649.3H326.5M327.5 649.3H450.5M451.5 649.3H574.5M575.5 649.3H698.5M699.5 649.3H822.5M823.5 649.3H946.5M947.5 649.3H1070.5M79.5 689.3H202.5M205.5 689.3H326.5M327.5 689.3H450.5M451.5 689.3H574.5M575.5 689.3H698.5M699.5 689.3H822.5M823.5 689.3H946.5M947.5 689.3H1070.5M79.5 729.3H202.5M205.5 729.3H326.5M327.5 729.3H450.5M451.5 729.3H574.5M575.5 729.3H698.5M699.5 729.3H822.5M823.5 729.3H946.5M947.5 729.3H1070.5M79.5 769.3H202.5M205.5 769.3H326.5M327.5 769.3H450.5M451.5 769.3H574.5M575.5 769.3H698.5M699.5 769.3H822.5M823.5 769.3H946.5M947.5 769.3H1070.5M79.5 809.3H202.5M205.5 809.3H326.5M327.5 809.3H450.5M451.5 809.3H574.5M575.5 809.3H698.5M699.5 809.3H822.5M823.5 809.3H946.5M947.5 809.3H1070.5M79.5 849.3H202.5M205.5 849.3H326.5M327.5 849.3H450.5M451.5 849.3H574.5M575.5 849.3H698.5M699.5 849.3H822.5M823.5 849.3H946.5M947.5 849.3H1070.5M79.5 889.3H202.5M205.5 889.3H326.5M327.5 889.3H450.5M451.5 889.3H574.5M575.5 889.3H698.5M699.5 889.3H822.5M823.5 889.3H946.5M947.5 889.3H1070.5M79.5 929.3H202.5M205.5 929.3H326.5M327.5 929.3H450.5M451.5 929.3H574.5M575.5 929.3H698.5M699.5 929.3H822.5M823.5 929.3H946.5M947.5 929.3H1070.5M79.5 969.3H202.5M205.5 969.3H326.5M327.5 969.3H450.5M451.5 969.3H574.5M575.5 969.3H698.5M699.5 969.3H822.5M823.5 969.3H946.5M947.5 969.3H1070.5M326.6 410.5V449.5M326.6 452.5V489.5M326.6 490.5V529.5M326.6 530.5V569.5M326.6 570.5V609.5M326.6 610.5V649.5M326.6 650.5V689.5M326.6 690.5V729.5M326.6 730.5V769.5M326.6 770.5V809.5M326.6 810.5V849.5M326.6 850.5V889.5M326.6 890.5V929.5M326.6 930.5V969.5M326.6 970.5V1009.5M450.6 410.5V449.5M450.6 452.5V489.5M450.6 490.5V529.5M450.6 530.5V569.5M450.6 570.5V609.5M450.6 610.5V649.5M450.6 650.5V689.5M450.6 690.5V729.5M450.6 730.5V769.5M450.6 770.5V809.5M450.6 810.5V849.5M450.6 850.5V889.5M450.6 890.5V929.5M450.6 930.5V969.5M450.6 970.5V1009.5M574.6 410.5V449.5M574.6 452.5V489.5M574.6 490.5V529.5M574.6 530.5V569.5M574.6 570.5V609.5M574.6 610.5V649.5M574.6 650.5V689.5M574.6 690.5V729.5M574.6 730.5V769.5M574.6 770.5V809.5M574.6 810.5V849.5M574.6 850.5V889.5M574.6 890.5V929.5M574.6 930.5V969.5M574.6 970.5V1009.5M698.6 410.5V449.5M698.6 452.5V489.5M698.6 490.5V529.5M698.6 530.5V569.5M698.6 570.5V609.5M698.6 610.5V649.5M698.6 650.5V689.5M698.6 690.5V729.5M698.6 730.5V769.5M698.6 770.5V809.5M698.6 810.5V849.5M698.6 850.5V889.5M698.6 890.5V929.5M698.6 930.5V969.5M698.6 970.5V1009.5M822.6 410.5V449.5M822.6 452.5V489.5M822.6 490.5V529.5M822.6 530.5V569.5M822.6 570.5V609.5M822.6 610.5V649.5M822.6 650.5V689.5M822.6 690.5V729.5M822.6 730.5V769.5M822.6 770.5V809.5M822.6 810.5V849.5M822.6 850.5V889.5M822.6 890.5V929.5M822.6 930.5V969.5M822.6 970.5V1009.5M946.6 410.5V449.5M946.6 452.5V489.5M946.6 490.5V529.5M946.6 530.5V569.5M946.6 570.5V609.5M946.6 610.5V649.5M946.6 650.5V689.5M946.6 690.5V729.5M946.6 730.5V769.5M946.6 770.5V809.5M946.6 810.5V849.5M946.6 850.5V889.5M946.6 890.5V929.5M946.6 930.5V969.5M946.6 970.5V1009.5" stroke="#000" stroke-width="2.3" stroke-dasharray="4.2 3.86" fill="none"/><rect x="1069.5" y="409.5" width="2" height="601" fill="#000"/><rect x="78.5" y="1008.5" width="993" height="2" fill="#000"/><rect x="199.8" y="410.0" width="5.6" height="600" fill="#000"/><rect x="79.5" y="446.7" width="992" height="5.6" fill="#000"/></svg>
<div class="ch" style="left:78.5px">A</div>
<div class="ch" style="left:202.5px">B</div>
<div class="ch" style="left:326.5px">C</div>
<div class="ch" style="left:450.5px">D</div>
<div class="ch" style="left:574.5px">E</div>
<div class="ch" style="left:698.5px">F</div>
<div class="ch" style="left:822.5px">G</div>
<div class="ch" style="left:946.5px">H</div>
<div class="ch" style="left:1070.5px">I</div>
<div class="ch" style="left:1194.5px">J</div>
<div class="ch" style="left:1318.5px">K</div>
<div class="ch" style="left:1442.5px">L</div>
<div class="ch" style="left:1566.5px">M</div>
<div class="ch" style="left:1690.5px">N</div>
<div class="ch" style="left:1814.5px">O</div>
<div class="ch" style="left:1938.5px">P</div>
<div class="ch" style="left:2062.5px">Q</div>
<div class="ch" style="left:2186.5px">R</div>
<div class="ch" style="left:2310.5px">S</div>
<div class="ch" style="left:2434.5px">T</div>
<div class="rh" style="top:409.5px">1</div>
<div class="rh" style="top:449.5px">2</div>
<div class="rh" style="top:489.5px">3</div>
<div class="rh" style="top:529.5px">4</div>
<div class="rh" style="top:569.5px">5</div>
<div class="rh" style="top:609.5px">6</div>
<div class="rh" style="top:649.5px">7</div>
<div class="rh" style="top:689.5px">8</div>
<div class="rh" style="top:729.5px">9</div>
<div class="rh" style="top:769.5px">10</div>
<div class="rh" style="top:809.5px">11</div>
<div class="rh" style="top:849.5px">12</div>
<div class="rh" style="top:889.5px">13</div>
<div class="rh" style="top:929.5px">14</div>
<div class="rh" style="top:969.5px">15</div>
<div class="rh" style="top:1009.5px">16</div>
<div class="rh" style="top:1049.5px">17</div>
<div class="rh" style="top:1089.5px">18</div>
<div class="rh" style="top:1129.5px">19</div>
<div class="rh" style="top:1169.5px">20</div>
<div class="rh" style="top:1209.5px">21</div>
<div class="rh" style="top:1249.5px">22</div>
<div class="rh" style="top:1289.5px">23</div>
<div class="rh" style="top:1329.5px">24</div>
<div class="rh" style="top:1369.5px">25</div>
<div class="rh" style="top:1409.5px">26</div>
<div class="rh" style="top:1449.5px">27</div>
<div class="rh" style="top:1489.5px">28</div>
<div class="rh" style="top:1529.5px">29</div>
<div class="c m" style="left:202.5px;top:409.5px">1970</div>
<div class="c m" style="left:326.5px;top:409.5px">1975</div>
<div class="c m" style="left:450.5px;top:409.5px">1980</div>
<div class="c m" style="left:574.5px;top:409.5px">1985</div>
<div class="c m" style="left:698.5px;top:409.5px">1990</div>
<div class="c m" style="left:822.5px;top:409.5px">1995</div>
<div class="c m" style="left:946.5px;top:409.5px">2000</div>
<div class="c l jp" style="left:78.5px;top:449.5px">北海道</div>
<div class="c r blu" style="left:202.5px;top:449.5px">5184</div>
<div class="c r blu" style="left:326.5px;top:449.5px">5338</div>
<div class="c r blu" style="left:450.5px;top:449.5px">5574</div>
<div class="c r blu" style="left:574.5px;top:449.5px">5678</div>
<div class="c r blu" style="left:698.5px;top:449.5px">5634</div>
<div class="c r blu" style="left:822.5px;top:449.5px">5687</div>
<div class="c r blu" style="left:946.5px;top:449.5px">5657</div>
<div class="c l jp" style="left:78.5px;top:489.5px">青森</div>
<div class="c r red" style="left:202.5px;top:489.5px">1427</div>
<div class="c r red" style="left:326.5px;top:489.5px">1469</div>
<div class="c r" style="left:450.5px;top:489.5px">1524</div>
<div class="c r" style="left:574.5px;top:489.5px">1525</div>
<div class="c r red" style="left:698.5px;top:489.5px">1482</div>
<div class="c r red" style="left:822.5px;top:489.5px">1480</div>
<div class="c r red" style="left:946.5px;top:489.5px">1475</div>
<div class="c l jp" style="left:78.5px;top:529.5px">岩手</div>
<div class="c r red" style="left:202.5px;top:529.5px">1371</div>
<div class="c r red" style="left:326.5px;top:529.5px">1385</div>
<div class="c r red" style="left:450.5px;top:529.5px">1421</div>
<div class="c r red" style="left:574.5px;top:529.5px">1433</div>
<div class="c r red" style="left:698.5px;top:529.5px">1417</div>
<div class="c r red" style="left:822.5px;top:529.5px">1419</div>
<div class="c r red" style="left:946.5px;top:529.5px">1415</div>
<div class="c l jp" style="left:78.5px;top:569.5px">宮城</div>
<div class="c r" style="left:202.5px;top:569.5px">1820</div>
<div class="c r" style="left:326.5px;top:569.5px">1955</div>
<div class="c r" style="left:450.5px;top:569.5px">2081</div>
<div class="c r" style="left:574.5px;top:569.5px">2175</div>
<div class="c r" style="left:698.5px;top:569.5px">2241</div>
<div class="c r" style="left:822.5px;top:569.5px">2328</div>
<div class="c r" style="left:946.5px;top:569.5px">2365</div>
<div class="c l jp" style="left:78.5px;top:609.5px">秋田</div>
<div class="c r red" style="left:202.5px;top:609.5px">1242</div>
<div class="c r red" style="left:326.5px;top:609.5px">1232</div>
<div class="c r red" style="left:450.5px;top:609.5px">1256</div>
<div class="c r red" style="left:574.5px;top:609.5px">1253</div>
<div class="c r red" style="left:698.5px;top:609.5px">1228</div>
<div class="c r red" style="left:822.5px;top:609.5px">1214</div>
<div class="c r red" style="left:946.5px;top:609.5px">1189</div>
<div class="c l jp" style="left:78.5px;top:649.5px">山形</div>
<div class="c r red" style="left:202.5px;top:649.5px">1226</div>
<div class="c r red" style="left:326.5px;top:649.5px">1220</div>
<div class="c r red" style="left:450.5px;top:649.5px">1253</div>
<div class="c r red" style="left:574.5px;top:649.5px">1262</div>
<div class="c r red" style="left:698.5px;top:649.5px">1258</div>
<div class="c r red" style="left:822.5px;top:649.5px">1257</div>
<div class="c r red" style="left:946.5px;top:649.5px">1244</div>
<div class="c l jp" style="left:78.5px;top:689.5px">福島</div>
<div class="c r" style="left:202.5px;top:689.5px">1946</div>
<div class="c r" style="left:326.5px;top:689.5px">1970</div>
<div class="c r" style="left:450.5px;top:689.5px">2036</div>
<div class="c r" style="left:574.5px;top:689.5px">2081</div>
<div class="c r" style="left:698.5px;top:689.5px">2102</div>
<div class="c r" style="left:822.5px;top:689.5px">2134</div>
<div class="c r" style="left:946.5px;top:689.5px">2127</div>
<div class="c l jp" style="left:78.5px;top:729.5px">茨城</div>
<div class="c r" style="left:202.5px;top:729.5px">2143</div>
<div class="c r" style="left:326.5px;top:729.5px">2341</div>
<div class="c r" style="left:450.5px;top:729.5px">2556</div>
<div class="c r" style="left:574.5px;top:729.5px">2726</div>
<div class="c r" style="left:698.5px;top:729.5px">2842</div>
<div class="c r" style="left:822.5px;top:729.5px">2954</div>
<div class="c r" style="left:946.5px;top:729.5px">2985</div>
<div class="c l jp" style="left:78.5px;top:769.5px">栃木</div>
<div class="c r" style="left:202.5px;top:769.5px">1580</div>
<div class="c r" style="left:326.5px;top:769.5px">1698</div>
<div class="c r" style="left:450.5px;top:769.5px">1791</div>
<div class="c r" style="left:574.5px;top:769.5px">1866</div>
<div class="c r" style="left:698.5px;top:769.5px">1934</div>
<div class="c r" style="left:822.5px;top:769.5px">1983</div>
<div class="c r" style="left:946.5px;top:769.5px">2004</div>
<div class="c l jp" style="left:78.5px;top:809.5px">群馬</div>
<div class="c r" style="left:202.5px;top:809.5px">1659</div>
<div class="c r" style="left:326.5px;top:809.5px">1756</div>
<div class="c r" style="left:450.5px;top:809.5px">1849</div>
<div class="c r" style="left:574.5px;top:809.5px">1922</div>
<div class="c r" style="left:698.5px;top:809.5px">1965</div>
<div class="c r" style="left:822.5px;top:809.5px">2003</div>
<div class="c r" style="left:946.5px;top:809.5px">2020</div>
<div class="c l jp" style="left:78.5px;top:849.5px">埼玉</div>
<div class="c r" style="left:202.5px;top:849.5px">3867</div>
<div class="c r" style="left:326.5px;top:849.5px">4819</div>
<div class="c r blu" style="left:450.5px;top:849.5px">5413</div>
<div class="c r blu" style="left:574.5px;top:849.5px">5861</div>
<div class="c r blu" style="left:698.5px;top:849.5px">6388</div>
<div class="c r blu" style="left:822.5px;top:849.5px">6748</div>
<div class="c r blu" style="left:946.5px;top:849.5px">6925</div>
<div class="c l jp" style="left:78.5px;top:889.5px">千葉</div>
<div class="c r" style="left:202.5px;top:889.5px">3867</div>
<div class="c r" style="left:326.5px;top:889.5px">4146</div>
<div class="c r" style="left:450.5px;top:889.5px">4731</div>
<div class="c r blu" style="left:574.5px;top:889.5px">5146</div>
<div class="c r blu" style="left:698.5px;top:889.5px">5538</div>
<div class="c r blu" style="left:822.5px;top:889.5px">5793</div>
<div class="c r blu" style="left:946.5px;top:889.5px">5916</div>
<div class="c l jp" style="left:78.5px;top:929.5px">東京</div>
<div class="c r blu" style="left:202.5px;top:929.5px">11409</div>
<div class="c r blu" style="left:326.5px;top:929.5px">11656</div>
<div class="c r blu" style="left:450.5px;top:929.5px">11598</div>
<div class="c r blu" style="left:574.5px;top:929.5px">11819</div>
<div class="c r blu" style="left:698.5px;top:929.5px">11762</div>
<div class="c r blu" style="left:822.5px;top:929.5px">11735</div>
<div class="c r blu" style="left:946.5px;top:929.5px">12017</div>
<div class="c l jp" style="left:78.5px;top:969.5px">神奈川</div>
<div class="c r blu" style="left:202.5px;top:969.5px">5473</div>
<div class="c r blu" style="left:326.5px;top:969.5px">6394</div>
<div class="c r blu" style="left:450.5px;top:969.5px">6919</div>
<div class="c r blu" style="left:574.5px;top:969.5px">7429</div>
<div class="c r blu" style="left:698.5px;top:969.5px">7955</div>
<div class="c r blu" style="left:822.5px;top:969.5px">8238</div>
<div class="c r blu" style="left:946.5px;top:969.5px">8475</div>
<div class="a" style="left:2895.5px;top:370px;width:2.2px;height:1200px;background:#a8a8a8"></div>
<div class="a" style="left:2897.7px;top:370px;width:42px;height:1201px;background:#f5f5f5"></div>
<div class="a" style="left:2904px;top:372px;width:29px;height:1196px;background:#e9e9e9"></div>
<div class="a" style="left:2904px;top:372px;width:29px;height:28px;background:#fff;border:2px solid #bcbcbc;border-radius:3px"></div>
<svg class="a" style="left:2910px;top:380px" width="17" height="10" viewBox="0 0 17 10"><path d="M8.5 0.5L16 9H1Z" fill="#6b6f4e"/></svg>
<div class="a" style="left:2904px;top:401px;width:29px;height:139px;background:#fff;border:2px solid #b4b4b4;border-top:3px solid #a8a8a8"></div>
<div class="a" style="left:2904px;top:1539.5px;width:29px;height:28px;background:#fff;border:2px solid #bcbcbc;border-radius:3px"></div>
<svg class="a" style="left:2910px;top:1549.5px" width="17" height="10" viewBox="0 0 17 10"><path d="M8.5 9.5L16 1H1Z" fill="#6b6f4e"/></svg>
<svg class="a" style="left:1090px;top:430px" width="1004" height="642" viewBox="1090 430 1004 642" font-family="Liberation Sans, Noto Sans CJK JP, sans-serif"><rect x="1112.0" y="451.09999999999997" width="958.9999999999999" height="598.8" fill="#fff"/><rect x="1102.3" y="441.3" width="16" height="16" rx="4.2" ry="4.2" fill="#fff" stroke="#8a8a8a" stroke-width="1.7"/><rect x="1102.3" y="740.7" width="16" height="16" rx="4.2" ry="4.2" fill="#fff" stroke="#8a8a8a" stroke-width="1.7"/><rect x="1102.3" y="1043.5" width="16" height="16" rx="4.2" ry="4.2" fill="#fff" stroke="#8a8a8a" stroke-width="1.7"/><rect x="1581.6" y="441.3" width="16" height="16" rx="4.2" ry="4.2" fill="#fff" stroke="#8a8a8a" stroke-width="1.7"/><rect x="1581.6" y="1043.5" width="16" height="16" rx="4.2" ry="4.2" fill="#fff" stroke="#8a8a8a" stroke-width="1.7"/><rect x="2064.4" y="441.3" width="16" height="16" rx="4.2" ry="4.2" fill="#fff" stroke="#8a8a8a" stroke-width="1.7"/><rect x="2064.4" y="740.7" width="16" height="16" rx="4.2" ry="4.2" fill="#fff" stroke="#8a8a8a" stroke-width="1.7"/><rect x="2064.4" y="1043.5" width="16" height="16" rx="4.2" ry="4.2" fill="#fff" stroke="#8a8a8a" stroke-width="1.7"/><rect x="1112.0" y="451.09999999999997" width="958.9999999999999" height="598.8" fill="none" stroke="#f44336" stroke-width="5.4"/><text x="1571" y="503.2" font-size="37.8" fill="#595959" text-anchor="middle">Chart Title</text><rect x="1200.5" y="757.00" width="828.8" height="1.6" fill="#dcdcdc"/><rect x="1200.5" y="658.60" width="828.8" height="1.6" fill="#dcdcdc"/><rect x="1200.5" y="560.20" width="828.8" height="1.6" fill="#dcdcdc"/><rect x="1199.6" y="511.90" width="1.6" height="344.40" fill="#dcdcdc"/><rect x="1199.6" y="855.40" width="829.7" height="1.6" fill="#dcdcdc"/><text x="1190.5" y="869.6" font-size="24" fill="#595959" text-anchor="end">0</text><text x="1190.5" y="771.2" font-size="24" fill="#595959" text-anchor="end">4000</text><text x="1190.5" y="672.8" font-size="24" fill="#595959" text-anchor="end">8000</text><text x="1190.5" y="574.4" font-size="24" fill="#595959" text-anchor="end">12000</text><rect x="1205.75" y="728.77" width="5.2" height="127.33" fill="#5b9bd5"/><rect x="1213.00" y="724.99" width="5.2" height="131.11" fill="#ed7d31"/><rect x="1220.25" y="719.18" width="5.2" height="136.92" fill="#a5a5a5"/><rect x="1227.50" y="716.62" width="5.2" height="139.48" fill="#ffc000"/><rect x="1234.75" y="717.70" width="5.2" height="138.40" fill="#4472c4"/><rect x="1242.00" y="716.40" width="5.2" height="139.70" fill="#70ad47"/><rect x="1249.25" y="717.14" width="5.2" height="138.96" fill="#255e91"/><text transform="translate(1252.6 888.0) rotate(-45)" font-size="24" fill="#595959" text-anchor="end" font-family="Noto Sans CJK JP, sans-serif">北海道</text><rect x="1264.95" y="821.20" width="5.2" height="34.90" fill="#5b9bd5"/><rect x="1272.20" y="820.16" width="5.2" height="35.94" fill="#ed7d31"/><rect x="1279.45" y="818.81" width="5.2" height="37.29" fill="#a5a5a5"/><rect x="1286.70" y="818.78" width="5.2" height="37.31" fill="#ffc000"/><rect x="1293.95" y="819.84" width="5.2" height="36.26" fill="#4472c4"/><rect x="1301.20" y="819.89" width="5.2" height="36.21" fill="#70ad47"/><rect x="1308.45" y="820.01" width="5.2" height="36.08" fill="#255e91"/><text transform="translate(1311.8 888.0) rotate(-45)" font-size="24" fill="#595959" text-anchor="end" font-family="Noto Sans CJK JP, sans-serif">青森</text><rect x="1324.15" y="822.57" width="5.2" height="33.53" fill="#5b9bd5"/><rect x="1331.40" y="822.23" width="5.2" height="33.87" fill="#ed7d31"/><rect x="1338.65" y="821.34" width="5.2" height="34.76" fill="#a5a5a5"/><rect x="1345.90" y="821.05" width="5.2" height="35.05" fill="#ffc000"/><rect x="1353.15" y="821.44" width="5.2" height="34.66" fill="#4472c4"/><rect x="1360.40" y="821.39" width="5.2" height="34.71" fill="#70ad47"/><rect x="1367.65" y="821.49" width="5.2" height="34.61" fill="#255e91"/><text transform="translate(1371.0 888.0) rotate(-45)" font-size="24" fill="#595959" text-anchor="end" font-family="Noto Sans CJK JP, sans-serif">岩手</text><rect x="1383.35" y="811.53" width="5.2" height="44.57" fill="#5b9bd5"/><rect x="1390.60" y="808.21" width="5.2" height="47.89" fill="#ed7d31"/><rect x="1397.85" y="805.11" width="5.2" height="50.99" fill="#a5a5a5"/><rect x="1405.10" y="802.79" width="5.2" height="53.30" fill="#ffc000"/><rect x="1412.35" y="801.17" width="5.2" height="54.93" fill="#4472c4"/><rect x="1419.60" y="799.03" width="5.2" height="57.07" fill="#70ad47"/><rect x="1426.85" y="798.12" width="5.2" height="57.98" fill="#255e91"/><text transform="translate(1430.2 888.0) rotate(-45)" font-size="24" fill="#595959" text-anchor="end" font-family="Noto Sans CJK JP, sans-serif">宮城</text><rect x="1442.55" y="825.75" width="5.2" height="30.35" fill="#5b9bd5"/><rect x="1449.80" y="825.99" width="5.2" height="30.11" fill="#ed7d31"/><rect x="1457.05" y="825.40" width="5.2" height="30.70" fill="#a5a5a5"/><rect x="1464.30" y="825.48" width="5.2" height="30.62" fill="#ffc000"/><rect x="1471.55" y="826.09" width="5.2" height="30.01" fill="#4472c4"/><rect x="1478.80" y="826.44" width="5.2" height="29.66" fill="#70ad47"/><rect x="1486.05" y="827.05" width="5.2" height="29.05" fill="#255e91"/><text transform="translate(1489.4 888.0) rotate(-45)" font-size="24" fill="#595959" text-anchor="end" font-family="Noto Sans CJK JP, sans-serif">秋田</text><rect x="1501.75" y="826.14" width="5.2" height="29.96" fill="#5b9bd5"/><rect x="1509.00" y="826.29" width="5.2" height="29.81" fill="#ed7d31"/><rect x="1516.25" y="825.48" width="5.2" height="30.62" fill="#a5a5a5"/><rect x="1523.50" y="825.25" width="5.2" height="30.85" fill="#ffc000"/><rect x="1530.75" y="825.35" width="5.2" height="30.75" fill="#4472c4"/><rect x="1538.00" y="825.38" width="5.2" height="30.72" fill="#70ad47"/><rect x="1545.25" y="825.70" width="5.2" height="30.40" fill="#255e91"/><text transform="translate(1548.6 888.0) rotate(-45)" font-size="24" fill="#595959" text-anchor="end" font-family="Noto Sans CJK JP, sans-serif">山形</text><rect x="1560.95" y="808.43" width="5.2" height="47.67" fill="#5b9bd5"/><rect x="1568.20" y="807.84" width="5.2" height="48.26" fill="#ed7d31"/><rect x="1575.45" y="806.21" width="5.2" height="49.89" fill="#a5a5a5"/><rect x="1582.70" y="805.11" width="5.2" height="50.99" fill="#ffc000"/><rect x="1589.95" y="804.59" width="5.2" height="51.51" fill="#4472c4"/><rect x="1597.20" y="803.80" width="5.2" height="52.30" fill="#70ad47"/><rect x="1604.45" y="803.98" width="5.2" height="52.12" fill="#255e91"/><text transform="translate(1607.8 888.0) rotate(-45)" font-size="24" fill="#595959" text-anchor="end" font-family="Noto Sans CJK JP, sans-serif">福島</text><rect x="1620.15" y="803.58" width="5.2" height="52.52" fill="#5b9bd5"/><rect x="1627.40" y="798.71" width="5.2" height="57.39" fill="#ed7d31"/><rect x="1634.65" y="793.42" width="5.2" height="62.68" fill="#a5a5a5"/><rect x="1641.90" y="789.24" width="5.2" height="66.86" fill="#ffc000"/><rect x="1649.15" y="786.39" width="5.2" height="69.71" fill="#4472c4"/><rect x="1656.40" y="783.63" width="5.2" height="72.47" fill="#70ad47"/><rect x="1663.65" y="782.87" width="5.2" height="73.23" fill="#255e91"/><text transform="translate(1667.0 888.0) rotate(-45)" font-size="24" fill="#595959" text-anchor="end" font-family="Noto Sans CJK JP, sans-serif">茨城</text><rect x="1679.35" y="817.43" width="5.2" height="38.67" fill="#5b9bd5"/><rect x="1686.60" y="814.53" width="5.2" height="41.57" fill="#ed7d31"/><rect x="1693.85" y="812.24" width="5.2" height="43.86" fill="#a5a5a5"/><rect x="1701.10" y="810.40" width="5.2" height="45.70" fill="#ffc000"/><rect x="1708.35" y="808.72" width="5.2" height="47.38" fill="#4472c4"/><rect x="1715.60" y="807.52" width="5.2" height="48.58" fill="#70ad47"/><rect x="1722.85" y="807.00" width="5.2" height="49.10" fill="#255e91"/><text transform="translate(1726.2 888.0) rotate(-45)" font-size="24" fill="#595959" text-anchor="end" font-family="Noto Sans CJK JP, sans-serif">栃木</text><rect x="1738.55" y="815.49" width="5.2" height="40.61" fill="#5b9bd5"/><rect x="1745.80" y="813.10" width="5.2" height="43.00" fill="#ed7d31"/><rect x="1753.05" y="810.81" width="5.2" height="45.29" fill="#a5a5a5"/><rect x="1760.30" y="809.02" width="5.2" height="47.08" fill="#ffc000"/><rect x="1767.55" y="807.96" width="5.2" height="48.14" fill="#4472c4"/><rect x="1774.80" y="807.03" width="5.2" height="49.07" fill="#70ad47"/><rect x="1782.05" y="806.61" width="5.2" height="49.49" fill="#255e91"/><text transform="translate(1785.4 888.0) rotate(-45)" font-size="24" fill="#595959" text-anchor="end" font-family="Noto Sans CJK JP, sans-serif">群馬</text><rect x="1797.75" y="761.17" width="5.2" height="94.93" fill="#5b9bd5"/><rect x="1805.00" y="737.75" width="5.2" height="118.35" fill="#ed7d31"/><rect x="1812.25" y="723.14" width="5.2" height="132.96" fill="#a5a5a5"/><rect x="1819.50" y="712.12" width="5.2" height="143.98" fill="#ffc000"/><rect x="1826.75" y="699.16" width="5.2" height="156.94" fill="#4472c4"/><rect x="1834.00" y="690.30" width="5.2" height="165.80" fill="#70ad47"/><rect x="1841.25" y="685.94" width="5.2" height="170.15" fill="#255e91"/><text transform="translate(1844.6 888.0) rotate(-45)" font-size="24" fill="#595959" text-anchor="end" font-family="Noto Sans CJK JP, sans-serif">埼玉</text><rect x="1856.95" y="761.17" width="5.2" height="94.93" fill="#5b9bd5"/><rect x="1864.20" y="754.31" width="5.2" height="101.79" fill="#ed7d31"/><rect x="1871.45" y="739.92" width="5.2" height="116.18" fill="#a5a5a5"/><rect x="1878.70" y="729.71" width="5.2" height="126.39" fill="#ffc000"/><rect x="1885.95" y="720.07" width="5.2" height="136.03" fill="#4472c4"/><rect x="1893.20" y="713.79" width="5.2" height="142.31" fill="#70ad47"/><rect x="1900.45" y="710.77" width="5.2" height="145.33" fill="#255e91"/><text transform="translate(1903.8 888.0) rotate(-45)" font-size="24" fill="#595959" text-anchor="end" font-family="Noto Sans CJK JP, sans-serif">千葉</text><rect x="1916.15" y="575.64" width="5.2" height="280.46" fill="#5b9bd5"/><rect x="1923.40" y="569.56" width="5.2" height="286.54" fill="#ed7d31"/><rect x="1930.65" y="570.99" width="5.2" height="285.11" fill="#a5a5a5"/><rect x="1937.90" y="565.55" width="5.2" height="290.55" fill="#ffc000"/><rect x="1945.15" y="566.95" width="5.2" height="289.15" fill="#4472c4"/><rect x="1952.40" y="567.62" width="5.2" height="288.48" fill="#70ad47"/><rect x="1959.65" y="560.68" width="5.2" height="295.42" fill="#255e91"/><text transform="translate(1963.0 888.0) rotate(-45)" font-size="24" fill="#595959" text-anchor="end" font-family="Noto Sans CJK JP, sans-serif">東京</text><rect x="1975.35" y="721.66" width="5.2" height="134.44" fill="#5b9bd5"/><rect x="1982.60" y="699.01" width="5.2" height="157.09" fill="#ed7d31"/><rect x="1989.85" y="686.09" width="5.2" height="170.01" fill="#a5a5a5"/><rect x="1997.10" y="673.55" width="5.2" height="182.55" fill="#ffc000"/><rect x="2004.35" y="660.61" width="5.2" height="195.49" fill="#4472c4"/><rect x="2011.60" y="653.65" width="5.2" height="202.45" fill="#70ad47"/><rect x="2018.85" y="647.81" width="5.2" height="208.28" fill="#255e91"/><text transform="translate(2022.2 888.0) rotate(-45)" font-size="24" fill="#595959" text-anchor="end" font-family="Noto Sans CJK JP, sans-serif">神奈川</text><rect x="1268.6" y="994" width="12.2" height="12.2" fill="#5b9bd5"/><text x="1284.8" y="1014.2" font-size="24" fill="#595959">1970</text><rect x="1358.0" y="994" width="12.2" height="12.2" fill="#ed7d31"/><text x="1374.2" y="1014.2" font-size="24" fill="#595959">1975</text><rect x="1447.4" y="994" width="12.2" height="12.2" fill="#a5a5a5"/><text x="1463.6" y="1014.2" font-size="24" fill="#595959">1980</text><rect x="1536.8" y="994" width="12.2" height="12.2" fill="#ffc000"/><text x="1553.0" y="1014.2" font-size="24" fill="#595959">1985</text><rect x="1626.2" y="994" width="12.2" height="12.2" fill="#4472c4"/><text x="1642.4" y="1014.2" font-size="24" fill="#595959">1990</text><rect x="1715.6" y="994" width="12.2" height="12.2" fill="#70ad47"/><text x="1731.8" y="1014.2" font-size="24" fill="#595959">1995</text><rect x="1805.0" y="994" width="12.2" height="12.2" fill="#255e91"/><text x="1821.2" y="1014.2" font-size="24" fill="#595959">2000</text></svg>
<div class="a" style="left:0;top:1570px;width:2940px;height:54px;background:#f5f5f5"></div>
<div class="a" style="left:0;top:1568.5px;width:2897.6px;height:2px;background:#b4b4b4"></div>
<svg class="a" style="left:50px;top:1589px" width="12" height="18" viewBox="0 0 12 18"><path d="M10 1L2 9L10 17Z" fill="#c4c4c4"/></svg>
<svg class="a" style="left:108px;top:1589px" width="12" height="18" viewBox="0 0 12 18"><path d="M2 1L10 9L2 17Z" fill="#c4c4c4"/></svg>
<div class="a" style="left:198px;top:1569.5px;width:140px;height:48.5px;background:#fff;border-left:2px solid #c6c6c6;border-right:2px solid #c6c6c6;border-bottom:4px solid #217346"></div>
<div class="t" style="left:196.5px;width:140px;top:1574.5px;text-align:center;font-weight:bold;font-size:26px;line-height:36px;color:#217346">Sheet1</div>
<svg class="a" style="left:402px;top:1579px" width="36" height="36" viewBox="0 0 36 36"><circle cx="17.5" cy="17.5" r="13.8" fill="none" stroke="#666" stroke-width="2.4"/><path d="M10.5 17.5H24.5M17.5 10.5V24.5" stroke="#555" stroke-width="3"/></svg>
<div class="a" style="left:1417.5px;top:1586px;width:4px;height:4px;background:#b5b5b5"></div>
<div class="a" style="left:1417.5px;top:1595.5px;width:4px;height:4px;background:#b5b5b5"></div>
<div class="a" style="left:1417.5px;top:1605px;width:4px;height:4px;background:#b5b5b5"></div>
<div class="a" style="left:1448px;top:1584px;width:1447px;height:28px;background:#e9e9e9;border-radius:3px"></div>
<div class="a" style="left:1448px;top:1584px;width:774px;height:28px;background:#fff;border:2px solid #b4b4b4;border-radius:3px"></div>
<div class="a" style="left:1475.5px;top:1584px;width:3px;height:28px;background:#b4b4b4"></div>
<svg class="a" style="left:1455px;top:1590px" width="10" height="16" viewBox="0 0 10 16"><path d="M9 0.5L0.5 8L9 15.5Z" fill="#5c5f45"/></svg>
<div class="a" style="left:2866px;top:1584px;width:29px;height:28px;background:#fff;border:2px solid #bcbcbc;border-radius:3px"></div>
<svg class="a" style="left:2876px;top:1590px" width="10" height="16" viewBox="0 0 10 16"><path d="M1 0.5L9.5 8L1 15.5Z" fill="#5c5f45"/></svg>
<div class="a" style="left:0;top:1624px;width:2940px;height:42px;background:#217346"></div>
<div class="st" style="left:20px">準備完了</div>
<div class="st" id="s1" style="left:1859px">平均:<span style="letter-spacing:1.3px;font-size:23px;margin-left:9px">3544.75238095238</span></div>
<div class="st" id="s2" style="left:2155px">データの個数:<span style="letter-spacing:1.3px;font-size:23px;margin-left:9px">119</span></div>
<div class="st" id="s3" style="left:2358px">合計:<span style="letter-spacing:1.3px;font-size:23px;margin-left:9px">372199</span></div>
<div class="st" id="s4" style="left:2861px"><span style="letter-spacing:0.5px;font-size:23px">100%</span></div>
<div class="a" style="left:2524px;top:1647px;width:23px;height:2px;background:#e4ede7"></div>
<div class="a" style="left:2560px;top:1647px;width:239px;height:2px;background:#e4ede7"></div>
<div class="a" style="left:2675px;top:1638px;width:8px;height:20px;background:#e6e6e6"></div>
<div class="a" style="left:2812px;top:1647px;width:22px;height:2px;background:#e4ede7"></div>
<div class="a" style="left:2822px;top:1637px;width:2px;height:22px;background:#e4ede7"></div>
<div class="a" style="left:0;top:0;width:2940px;height:1px;background:rgba(0,0,0,0.55)"></div>
<div class="a" style="left:0;top:1px;width:1px;height:1665px;background:rgba(0,0,0,0.55)"></div>
<div class="a" style="left:2939px;top:1px;width:1px;height:1665px;background:rgba(0,0,0,0.55)"></div>
<div class="a" style="left:1px;top:1665px;width:2938px;height:1px;background:#4a5a54"></div>
</body></html>
